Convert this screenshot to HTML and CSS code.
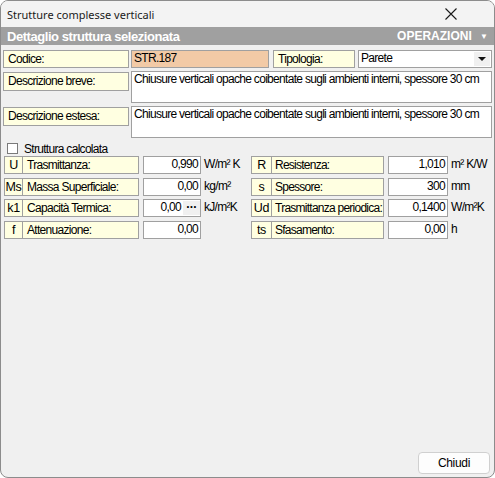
FILE: index.html
```html
<!DOCTYPE html>
<html lang="it">
<head>
<meta charset="utf-8">
<title>Strutture complesse verticali</title>
<link rel="stylesheet" href="styles.css">
</head>
<body>
<div class="window">
  <div class="titlebar">
    <span class="title">Strutture complesse verticali</span>
    <svg class="close" width="12" height="12" viewBox="0 0 12 12"><path d="M0.5 0.5 L11.5 11.5 M11.5 0.5 L0.5 11.5" stroke="#1a1a1a" stroke-width="1.1" fill="none"/></svg>
  </div>
  <div class="sectionbar">
    <span class="sb-title">Dettaglio struttura selezionata</span>
    <span class="sb-ops">OPERAZIONI <span class="tri">▼</span></span>
  </div>
  <div class="content">
    <div class="row r1">
      <div class="lbl w-code">Codice:</div>
      <div class="field peach w-codev">STR.187</div>
      <div class="lbl w-tip">Tipologia:</div>
      <div class="field select w-sel"><span>Parete</span><span class="arrow"><svg width="8" height="4" viewBox="0 0 8 4"><path d="M0 0 H8 L4 4 Z" fill="#111"/></svg></span></div>
    </div>
    <div class="row r2">
      <div class="lbl w-code">Descrizione breve:</div>
      <div class="field area">Chiusure verticali opache coibentate sugli ambienti interni, spessore 30 cm</div>
    </div>
    <div class="row r2">
      <div class="lbl w-code">Descrizione estesa:</div>
      <div class="field area">Chiusure verticali opache coibentate sugli ambienti interni, spessore 30 cm</div>
    </div>
    <div class="check">
      <span class="box"></span><span>Struttura calcolata</span>
    </div>
    <div class="params">
      <div class="col left">
        <div class="prow"><div class="sym">U</div><div class="plbl">Trasmittanza:</div><div class="val">0,990</div><div class="unit">W/m² K</div></div>
        <div class="prow"><div class="sym">Ms</div><div class="plbl">Massa Superficiale:</div><div class="val">0,00</div><div class="unit">kg/m²</div></div>
        <div class="prow"><div class="sym">k1</div><div class="plbl">Capacità Termica:</div><div class="val btnval"><span>0,00</span><span class="dots">···</span></div><div class="unit">kJ/m²K</div></div>
        <div class="prow"><div class="sym">f</div><div class="plbl">Attenuazione:</div><div class="val">0,00</div><div class="unit"></div></div>
      </div>
      <div class="col right">
        <div class="prow"><div class="sym">R</div><div class="plbl">Resistenza:</div><div class="val peach">1,010</div><div class="unit">m² K/W</div></div>
        <div class="prow"><div class="sym">s</div><div class="plbl">Spessore:</div><div class="val">300</div><div class="unit">mm</div></div>
        <div class="prow"><div class="sym">Ud</div><div class="plbl">Trasmittanza periodica:</div><div class="val">0,1400</div><div class="unit">W/m²K</div></div>
        <div class="prow"><div class="sym">ts</div><div class="plbl">Sfasamento:</div><div class="val">0,00</div><div class="unit">h</div></div>
      </div>
    </div>
  </div>
  <div class="footer">
    <button class="btn">Chiudi</button>
  </div>
</div>
</body>
</html>
```
FILE: styles.css
```css
* { box-sizing: border-box; }
html, body { margin: 0; padding: 0; background: #ffffff; }
body { width: 495px; height: 478px; overflow: hidden; }

.window {
  width: 495px;
  height: 478px;
  border: 1px solid #8c8c8c;
  border-radius: 8px;
  background: #f0f0f0;
  display: flex;
  flex-direction: column;
  overflow: hidden;
  font-family: "Liberation Sans", Arial, sans-serif;
  font-size: 12px;
  letter-spacing: -0.7px;
  color: #000;
}

.titlebar {
  height: 26px;
  background: #f3f3f3;
  display: flex;
  align-items: center;
  justify-content: space-between;
  padding: 0 37px 0 6px;
  flex: none;
}
.title {
  font-family: "Noto Sans", "Liberation Sans", sans-serif;
  font-size: 11px;
  letter-spacing: 0;
  color: #1a1a1a;
}
.close { display: block; }

.sectionbar {
  height: 18px;
  background: #a0a0a0;
  color: #ffffff;
  font-weight: bold;
  font-size: 13px;
  display: flex;
  align-items: center;
  justify-content: space-between;
  padding: 0 6px 0 6px;
  flex: none;
  letter-spacing: -0.45px;
}
.sb-ops { letter-spacing: 0; font-size: 12px; }
.tri { font-size: 8px; margin-left: 5px; position: relative; top: -1px; }

.content {
  padding: 5px 2px 0 2px;
  display: flex;
  flex-direction: column;
}

.row { display: flex; align-items: flex-start; }
.r1 { height: 18px; gap: 2px; }
.r2 { margin-top: 3px; gap: 2px; }

.lbl {
  flex: none;
  background: #ffffe1;
  border: 1px solid #a0a0a0;
  height: 18px;
  line-height: 16px;
  padding-left: 4px;
  white-space: nowrap;
  overflow: hidden;
}
.r2 .lbl { margin-top: 1px; height: 19px; line-height: 17px; }

.w-code { width: 126px; }
.w-codev { width: 138px; }
.w-tip { width: 82px; margin-left: 2px; }
.w-sel { width: 134px; margin-left: 1px; }

.field {
  flex: none;
  border: 1px solid #a0a0a0;
  background: #ffffff;
  height: 18px;
  line-height: 15px;
  padding-left: 2px;
  white-space: nowrap;
  overflow: hidden;
}
.peach { background: #f2caa6; }

.select {
  display: flex;
  justify-content: space-between;
  padding-right: 1px;
}
.arrow {
  width: 16px;
  height: 14px;
  margin-top: 1px;
  background: #f0f0f0;
  display: flex;
  align-items: center;
  justify-content: center;
}
.arrow svg { display: block; }

.area {
  flex: 1 1 auto;
  height: 32px;
  line-height: 15px;
}

.check {
  display: flex;
  align-items: center;
  gap: 6px;
  margin-top: 5px;
  padding-left: 4px;
  height: 11px;
}
.box {
  width: 11px;
  height: 11px;
  border: 1px solid #7a7a7a;
  background: #fff;
}

.params {
  display: flex;
  margin-top: 2px;
}
.col { display: flex; flex-direction: column; gap: 3.5px; }
.left { width: 247px; padding-left: 1px; }
.right { padding-left: 1px; }

.prow { display: flex; height: 18px; align-items: stretch; }
.sym {
  background: #ffffe1;
  border: 1px solid #a0a0a0;
  text-align: center;
  line-height: 16px;
  font-size: 12.5px;
  letter-spacing: -0.3px;
}
.plbl {
  background: #ffffe1;
  border: 1px solid #a0a0a0;
  border-left: none;
  line-height: 16px;
  padding-left: 4px;
  white-space: nowrap;
  overflow: hidden;
}
.val {
  border: 1px solid #a0a0a0;
  background: #fff;
  margin-left: 4px;
  text-align: right;
  line-height: 15px;
  padding-right: 2px;
}
.unit {
  padding-left: 3px;
  line-height: 17px;
  white-space: nowrap;
}
.left .sym { width: 19px; }
.left .plbl { width: 116px; }
.left .val { width: 58px; }
.right .sym { width: 21px; }
.right .plbl { width: 112px; padding-left: 3px; letter-spacing: -0.75px; }
.right .val { width: 60px; }

.btnval { display: flex; justify-content: flex-end; padding-right: 0; }
.dots {
  width: 17px;
  background: #f0f0f0;
  margin: 1px 0 1px 2px;
  text-align: center;
  font-weight: bold;
  line-height: 12px;
  letter-spacing: -0.5px;
}

.footer {
  margin-top: auto;
  display: flex;
  justify-content: flex-end;
  padding: 0 4px 3px 0;
}
.btn {
  width: 72px;
  height: 22px;
  background: #fdfdfd;
  border: 1px solid #d0d0d0;
  border-radius: 4px;
  font-family: "Liberation Sans", sans-serif;
  font-size: 12px;
  letter-spacing: -0.3px;
  color: #000;
  padding: 0;
}
```
